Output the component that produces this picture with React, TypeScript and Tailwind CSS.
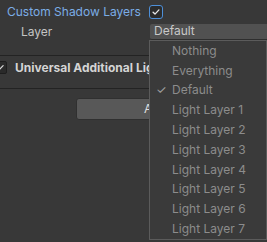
import React from "react";

const layers = [
  "Nothing",
  "Everything",
  "Default",
  "Light Layer 1",
  "Light Layer 2",
  "Light Layer 3",
  "Light Layer 4",
  "Light Layer 5",
  "Light Layer 6",
  "Light Layer 7",
];

function Check({ className }: { className?: string }) {
  return (
    <svg className={className} viewBox="0 0 12 12" fill="none" stroke="currentColor">
      <path strokeWidth={1.6} strokeLinecap="round" strokeLinejoin="round" d="M2.5 6.3l2.3 2.2 4.7-5" />
    </svg>
  );
}

export default function App() {
  return (
    <div
      className="relative w-[267px] h-[242px] overflow-hidden bg-[#383838] text-[12px]"
      style={{ fontFamily: "Inter, 'Noto Sans', sans-serif" }}
    >
      {/* Custom Shadow Layers toggle */}
      <div className="flex items-center h-[23px] pl-[7px]">
        <span className="w-[142px] text-[#7bade6]">Custom Shadow Layers</span>
        <span className="flex items-center justify-center w-[14px] h-[14px] rounded-[3px] border border-[#4d8fd8] bg-[#2b2b2b] text-[#e6e6e6]">
          <Check className="w-[10px] h-[10px]" />
        </span>
      </div>

      {/* Layer field */}
      <div className="flex items-center h-[17px]">
        <span className="w-[150px] pl-[21px] text-[#c4c4c4]">Layer</span>
        <div className="flex-1 h-[16px] flex items-center pl-[4px] bg-[#515151] border-b border-[#2e2e2e] text-[#c8c8c8] rounded-l-[2px]">
          Default
        </div>
      </div>

      <div className="h-[15px]" />
      <div className="h-px bg-[#232323]" />

      {/* Universal Additional Light Data */}
      <div className="flex items-center h-[23px]">
        <span className="flex items-center justify-center -ml-[6px] w-[13px] h-[13px] rounded-[2px] border border-[#1e1e1e] bg-[#2a2a2a] text-[#d8d8d8]">
          <Check className="w-[9px] h-[9px]" />
        </span>
        <span className="ml-[8px] font-bold text-[#d4d4d4] whitespace-nowrap">Universal Additional Light Data</span>
      </div>

      <div className="h-[9px]" />
      <div className="h-px bg-[#232323]" />

      <div className="pt-[9px] pl-[76px]">
        <button className="w-[220px] h-[22px] rounded-[3px] bg-[#585858] border border-[#303030] text-[#e0e0e0] text-center">
          Add Light Data
        </button>
      </div>

      {/* Layer dropdown menu */}
      <div className="absolute left-[149px] top-[40px] w-[118px] h-[200px] border border-[#5b5b5b] bg-[#3a3a3a]">
        {layers.map((name) => (
          <div key={name} className="relative flex items-center h-[19.8px] leading-none pl-[22px] text-[#8c8c8c] whitespace-nowrap">
            {name === "Default" && <span className="absolute left-[6px] text-[#a0a0a0]">✓</span>}
            {name}
          </div>
        ))}
      </div>
    </div>
  );
}
